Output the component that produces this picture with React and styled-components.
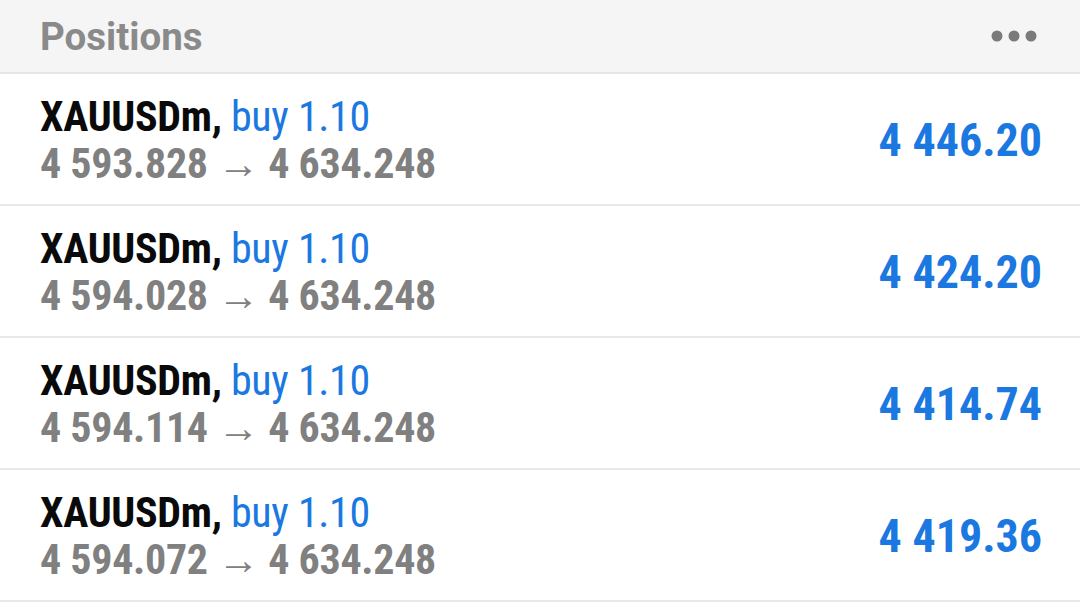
import React from "react";
import styled, { createGlobalStyle } from "styled-components";

const GlobalStyle = createGlobalStyle`
  body {
    margin: 0;
    background: #ffffff;
    font-family: Roboto, "Noto Sans", sans-serif;
  }
`;

const positions = [
  { symbol: "XAUUSDm", side: "buy", volume: "1.10", open: "4 593.828", current: "4 634.248", profit: "4 446.20" },
  { symbol: "XAUUSDm", side: "buy", volume: "1.10", open: "4 594.028", current: "4 634.248", profit: "4 424.20" },
  { symbol: "XAUUSDm", side: "buy", volume: "1.10", open: "4 594.114", current: "4 634.248", profit: "4 414.74" },
  { symbol: "XAUUSDm", side: "buy", volume: "1.10", open: "4 594.072", current: "4 634.248", profit: "4 419.36" },
];

const Page = styled.div`
  width: 1080px;
  background: #ffffff;
`;

const Header = styled.header`
  height: 74px;
  box-sizing: border-box;
  display: flex;
  align-items: center;
  justify-content: space-between;
  padding: 0 43px 0 40px;
  background: #f5f5f5;
  border-bottom: 2px solid #e6e6e6;
`;

const Title = styled.h1`
  margin: 0;
  font-family: Roboto, sans-serif;
  font-size: 38.5px;
  font-weight: 700;
  color: #8a8a8a;
`;

const MoreButton = styled.button`
  display: flex;
  align-items: center;
  padding: 0;
  border: 0;
  background: none;
  cursor: pointer;
`;

const Row = styled.div`
  height: 132px;
  box-sizing: border-box;
  display: flex;
  align-items: center;
  justify-content: space-between;
  padding: 1px 38px 0 40px;
  border-bottom: 2px solid #e8e8e8;
  font-family: Roboto, sans-serif;
  font-stretch: 75%;
`;

const Info = styled.div`
  display: flex;
  flex-direction: column;
  font-size: 42px;
  line-height: 47px;
  letter-spacing: -0.3px;
  white-space: nowrap;
`;

const Symbol = styled.span`
  font-weight: 700;
  color: #0a0a0a;
`;

const Side = styled.span`
  font-weight: 400;
  color: #1a78e0;
`;

const Prices = styled.div`
  font-weight: 700;
  color: #808080;
`;

const Arrow = styled.span`
  font-weight: 400;
`;

const Profit = styled.div`
  font-size: 46px;
  font-weight: 700;
  color: ${(p) => (p.$negative ? "#e53935" : "#1a78e0")};
`;

const Dots = () => (
  <svg width="46" height="14" viewBox="0 0 46 14">
    <circle cx="6" cy="7" r="5.5" fill="#7a7a7a" />
    <circle cx="23" cy="7" r="5.5" fill="#7a7a7a" />
    <circle cx="40" cy="7" r="5.5" fill="#7a7a7a" />
  </svg>
);

export default function App() {
  return (
    <Page>
      <GlobalStyle />
      <Header>
        <Title>Positions</Title>
        <MoreButton>
          <Dots />
        </MoreButton>
      </Header>
      {positions.map((p, i) => (
        <Row key={i}>
          <Info>
            <div>
              <Symbol>{p.symbol},</Symbol> <Side>{p.side} {p.volume}</Side>
            </div>
            <Prices>
              {p.open} <Arrow>→</Arrow> {p.current}
            </Prices>
          </Info>
          <Profit>{p.profit}</Profit>
        </Row>
      ))}
    </Page>
  );
}
